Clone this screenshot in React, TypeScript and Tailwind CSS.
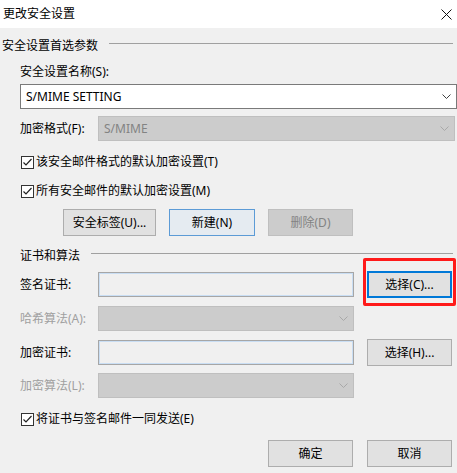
import type { ReactNode } from 'react'

const font = "font-['Microsoft_YaHei_UI','Noto_Sans','Noto_Sans_CJK_SC',sans-serif]"

function Chevron({ disabled }: { disabled?: boolean }) {
  return (
    <svg width="9" height="5" viewBox="0 0 9 5" className="shrink-0">
      <path d="M0.5 0.5 L4.5 4.5 L8.5 0.5" fill="none" stroke={disabled ? '#a8a8a8' : '#404040'} strokeWidth="1" />
    </svg>
  )
}

function ComboBox({ value, disabled, className }: { value?: string; disabled?: boolean; className: string }) {
  return (
    <div
      className={`${className} h-[25px] flex items-center justify-between pl-[5px] pr-[5px] border ${
        disabled ? 'bg-[#cccccc] border-[#bfbfbf] text-[#838383]' : 'bg-white border-[#7a7a7a] text-black'
      }`}
    >
      <span className="leading-[18px]">{value}</span>
      <Chevron disabled={disabled} />
    </div>
  )
}

function TextBox() {
  return <div className="w-[256px] h-[25px] border border-[#a6a6a6] shadow-[inset_0_0_0_1px_#c9def4] bg-[#f0f0f0]" />
}

function Button({
  children,
  width,
  variant,
}: {
  children: ReactNode
  width: string
  variant?: 'default' | 'disabled' | 'focused'
}) {
  let tone = 'bg-[#e1e1e1] border border-[#adadad] text-black'
  if (variant === 'default') tone = 'bg-[#e5ebf1] border border-[#5c9bd6] text-black'
  if (variant === 'disabled') tone = 'bg-[#cccccc] border border-[#bfbfbf] text-[#838383]'
  if (variant === 'focused') tone = 'bg-[#e1e1e1] border-2 border-[#0078d7] text-black'
  return (
    <div className={`${width} h-[27px] flex items-center justify-center leading-[18px] ${tone}`}>{children}</div>
  )
}

function CheckRow({ label }: { label: string }) {
  return (
    <div className="h-[18px] flex items-center pl-[21px]">
      <div className="w-[13px] h-[13px] border border-[#333333] bg-white flex items-center justify-center">
        <svg width="11" height="11" viewBox="0 0 11 11">
          <path d="M1.5 5.5 L4 8 L9.5 2" fill="none" stroke="#222222" strokeWidth="1.2" />
        </svg>
      </div>
      <span className="ml-[2px] leading-[18px]">{label}</span>
    </div>
  )
}

function GroupHeader({ title, indent, gap }: { title: string; indent: string; gap: string }) {
  return (
    <div className={`h-[18px] flex ${indent} pr-[4px]`}>
      <span className="leading-[18px]">{title}</span>
      <div className={`flex-1 h-px bg-[#a0a0a0] mt-[6px] ${gap}`} />
    </div>
  )
}

export default function App() {
  return (
    <div className={`${font} w-[457px] h-[473px] bg-[#f0f0f0] text-[12px] text-black overflow-hidden`}>
      {/* Title bar */}
      <div className="h-[28px] bg-white flex items-center justify-between pl-[3px] pr-[5px]">
        <span className="leading-[18px]">更改安全设置</span>
        <svg width="11" height="11" viewBox="0 0 11 11">
          <path d="M0.5 0.5 L10.5 10.5 M10.5 0.5 L0.5 10.5" stroke="#111111" strokeWidth="1" />
        </svg>
      </div>

      {/* Security settings preferences */}
      <div className="mt-[9px]">
        <GroupHeader title="安全设置首选参数" indent="pl-[2px]" gap="ml-[11px]" />
      </div>
      <div className="mt-[8px] h-[18px] pl-[20px] leading-[18px]">安全设置名称(S):</div>
      <div className="mt-[3px] pl-[20px]">
        <ComboBox value="S/MIME SETTING" className="w-[437px]" />
      </div>
      <div className="mt-[7px] flex items-center pl-[20px]">
        <span className="w-[78px] leading-[18px]">加密格式(F):</span>
        <ComboBox value="S/MIME" disabled className="w-[357px]" />
      </div>
      <div className="mt-[12px]">
        <CheckRow label="该安全邮件格式的默认加密设置(T)" />
      </div>
      <div className="mt-[11px]">
        <CheckRow label="所有安全邮件的默认加密设置(M)" />
      </div>
      <div className="mt-[9px] flex pl-[63px] gap-[13px]">
        <Button width="w-[93px]">安全标签(U)...</Button>
        <Button width="w-[86px]" variant="default">新建(N)</Button>
        <Button width="w-[85px]" variant="disabled">删除(D)</Button>
      </div>

      {/* Certificates and algorithms */}
      <div className="mt-[11px]">
        <GroupHeader title="证书和算法" indent="pl-[20px]" gap="ml-[11px]" />
      </div>
      <div className="mt-[6px] flex items-center pl-[20px]">
        <span className="w-[78px] leading-[18px]">签名证书:</span>
        <TextBox />
        <div className="relative ml-[13px]">
          <Button width="w-[85px]" variant="focused">选择(C)...</Button>
          <div className="absolute -left-[4px] -right-[4px] -top-[13px] -bottom-[8px] border-[3px] border-[#ff1a1a] rounded-[2px]" />
        </div>
      </div>
      <div className="mt-[8px] flex items-center pl-[20px]">
        <span className="w-[78px] leading-[18px] text-[#a0a0a0]">哈希算法(A):</span>
        <ComboBox disabled className="w-[256px]" />
      </div>
      <div className="mt-[8px] flex items-center pl-[20px]">
        <span className="w-[78px] leading-[18px]">加密证书:</span>
        <TextBox />
        <div className="ml-[13px]">
          <Button width="w-[85px]">选择(H)...</Button>
        </div>
      </div>
      <div className="mt-[7px] flex items-center pl-[20px]">
        <span className="w-[78px] leading-[18px] text-[#a0a0a0]">加密算法(L):</span>
        <ComboBox disabled className="w-[256px]" />
      </div>
      <div className="mt-[12px]">
        <CheckRow label="将证书与签名邮件一同发送(E)" />
      </div>

      {/* Dialog buttons */}
      <div className="mt-[12px] flex justify-end gap-[14px] pr-[5px]">
        <Button width="w-[85px]">确定</Button>
        <Button width="w-[85px]">取消</Button>
      </div>
    </div>
  )
}
